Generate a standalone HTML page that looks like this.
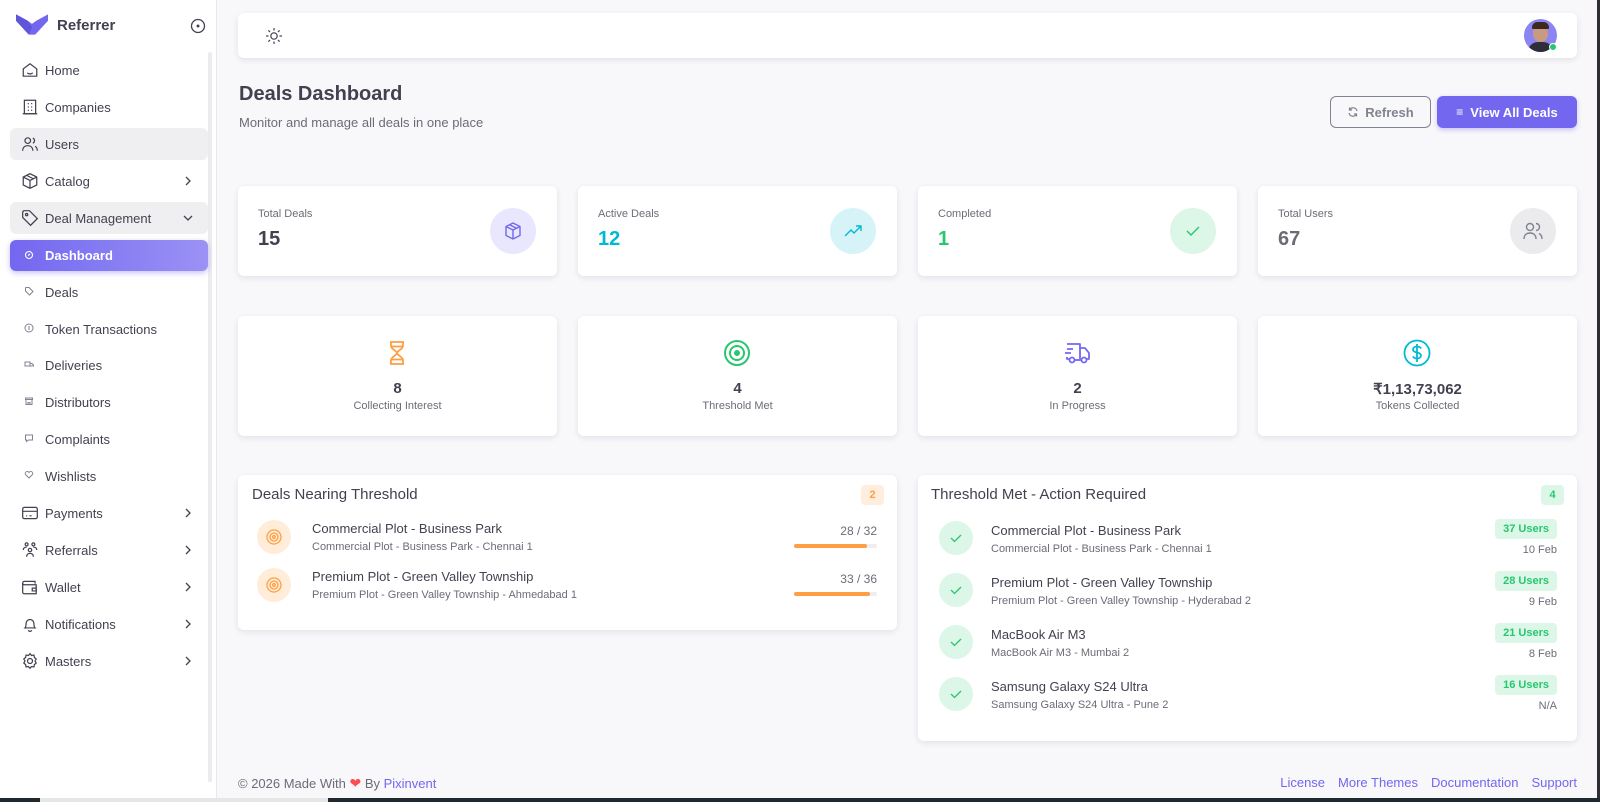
<!DOCTYPE html>
<html><head><meta charset="utf-8"><style>
*{margin:0;padding:0;box-sizing:border-box}
body{width:1600px;height:802px;overflow:hidden;background:#f8f7fa;font-family:"Liberation Sans",sans-serif;color:#444050;position:relative}
.a{position:absolute}
.side{left:0;top:0;width:217px;height:798px;background:#fff;border-right:1px solid #e8e8ec}
.mi{position:absolute;left:10px;width:198px;height:32px;border-radius:6px;font-size:13px;color:#444050;display:flex;align-items:center;padding-left:35px}
.mi svg{position:absolute;left:11px;top:7px}
.mi .ch{position:absolute;left:172px;top:10px}
.card{position:absolute;background:#fff;border-radius:6px;box-shadow:0 2px 6px rgba(47,43,61,.10)}
.lbl{position:absolute;font-size:11px;color:#6d6b77}
.val{position:absolute;font-size:20px;font-weight:bold}
.ic{position:absolute;width:46px;height:46px;border-radius:50%;display:flex;align-items:center;justify-content:center}
.c2{text-align:center}
.c2 .n{position:absolute;left:0;right:0;top:64px;font-size:15px;font-weight:bold;color:#444050}
.c2 .l{position:absolute;left:0;right:0;top:84px;font-size:11px;color:#6d6b77}
.c2 svg{position:absolute;left:144px;top:22px}
.t{font-size:13px;color:#444050;position:absolute;white-space:nowrap}
.s{font-size:11px;color:#6d6b77;position:absolute;white-space:nowrap}
.ub{position:absolute;right:20px;height:20px;padding:0 8px;border-radius:4px;background:#dcf6e8;color:#28c76f;font-size:11px;font-weight:bold;line-height:20px}
.dt{position:absolute;right:20px;font-size:11px;color:#6d6b77}
.gc{position:absolute;left:21px;width:34px;height:34px;border-radius:50%;background:#dcf6e8;display:flex;align-items:center;justify-content:center}
.fl span{margin-left:13px}
</style></head><body>

<div class="a side">
  <svg class="a" style="left:16px;top:14px" width="32" height="22" viewBox="0 0 30 20"><path d="M0 0 L11 6 L15 9 L19 6 L30 0 L30 6 L18 19 L12 19 L0 6Z" fill="#7367f0"/><path d="M0 0 L11 6 L15 12 L12 19 L0 6Z" fill="#5f55d8"/></svg>
  <div class="a" style="left:57px;top:17px;font-size:15px;font-weight:bold;color:#444050">Referrer</div>
  <svg class="a" style="left:190px;top:18px" width="16" height="16" viewBox="0 0 16 16"><circle cx="8" cy="8" r="6.5" fill="none" stroke="#444050" stroke-width="1.3"/><circle cx="8" cy="8" r="1.5" fill="#444050"/></svg>
  <div class="a" style="left:208px;top:52px;width:4px;height:730px;background:#ececee;border-radius:2px"></div>

  <div class="mi" style="top:54px"><svg width="18" height="18" viewBox="0 0 16 16" fill="none" stroke="#444050" stroke-width="1.1"><path d="M2 7 L8 2.5 L14 7 V13.5 H2Z"/><path d="M5.5 10.5 q2.5 2 5 0"/></svg>Home</div>
  <div class="mi" style="top:91px"><svg width="18" height="18" viewBox="0 0 16 16" fill="none" stroke="#444050" stroke-width="1.1"><rect x="3" y="2" width="10" height="12"/><path d="M1.5 14h13M6 5h1M9 5h1M6 8h1M9 8h1M6 11h1M9 11h1"/></svg>Companies</div>
  <div class="mi" style="top:128px;background:#efeff1"><svg width="18" height="18" viewBox="0 0 16 16" fill="none" stroke="#444050" stroke-width="1.1"><circle cx="6" cy="5" r="2.5"/><path d="M1.5 14c0-3 2-4.5 4.5-4.5s4.5 1.5 4.5 4.5M10.5 2.7a2.5 2.5 0 0 1 0 4.6M12.5 10c1.3.7 2 2 2 4"/></svg>Users</div>
  <div class="mi" style="top:165px"><svg width="18" height="18" viewBox="0 0 16 16" fill="none" stroke="#444050" stroke-width="1.1"><path d="M8 1.5 L14 4.5 V11.5 L8 14.5 L2 11.5 V4.5Z M2 4.5 L8 7.5 L14 4.5 M8 7.5 V14.5 M5 3 L11 6"/></svg>Catalog<svg class="ch" width="12" height="12" viewBox="0 0 12 12"><path d="M4 2 L8 6 L4 10" fill="none" stroke="#444050" stroke-width="1.3"/></svg></div>
  <div class="mi" style="top:202px;background:#efeff1"><svg width="18" height="18" viewBox="0 0 16 16" fill="none" stroke="#444050" stroke-width="1.1"><path d="M1.5 2.5 V7.5 L8.5 14.5 L14.5 8.5 L7.5 1.5 H2.5Z"/><circle cx="5" cy="5" r="1"/></svg>Deal Management<svg class="ch" width="12" height="12" viewBox="0 0 12 12"><path d="M2 4 L6 8 L10 4" fill="none" stroke="#444050" stroke-width="1.3"/></svg></div>
  <div class="mi" style="top:240px;height:31px;background:linear-gradient(90deg,#7367f0,#9a92f5);color:#fff;font-weight:bold;box-shadow:0 2px 6px rgba(115,103,240,.4)"><svg width="16" height="16" viewBox="0 0 16 16" fill="none" stroke="#fff" stroke-width="1.1" style="top:7px"><circle cx="8" cy="8" r="3.5"/><path d="M7 8.5 L9 7"/></svg>Dashboard</div>
  <div class="mi" style="top:276px"><svg width="16" height="16" viewBox="0 0 16 16" fill="none" stroke="#808390" stroke-width="1"><path d="M4.5 5 V8 L8.5 12 L12 8.5 L8 4.5 H5Z"/></svg>Deals</div>
  <div class="mi" style="top:313px"><svg width="16" height="16" viewBox="0 0 16 16" fill="none" stroke="#808390" stroke-width="1"><circle cx="8" cy="8" r="4"/><path d="M8 6v4"/></svg>Token Transactions</div>
  <div class="mi" style="top:349px"><svg width="16" height="16" viewBox="0 0 16 16" fill="none" stroke="#808390" stroke-width="1"><path d="M4 6h5v4H4zM9 7.5h2l1.5 1.5V10H9"/></svg>Deliveries</div>
  <div class="mi" style="top:386px"><svg width="16" height="16" viewBox="0 0 16 16" fill="none" stroke="#808390" stroke-width="1"><path d="M4.5 5h7v1.5h-7zM5 6.5v5h6v-5M7 11.5v-2h2v2"/></svg>Distributors</div>
  <div class="mi" style="top:423px"><svg width="16" height="16" viewBox="0 0 16 16" fill="none" stroke="#808390" stroke-width="1"><path d="M4.5 5h7v5h-4l-2 1.5V10h-1z"/></svg>Complaints</div>
  <div class="mi" style="top:460px"><svg width="16" height="16" viewBox="0 0 16 16" fill="none" stroke="#808390" stroke-width="1"><path d="M8 11 L4.5 7.5 a2 2 0 0 1 3.5-2 a2 2 0 0 1 3.5 2Z"/></svg>Wishlists</div>
  <div class="mi" style="top:497px"><svg width="18" height="18" viewBox="0 0 16 16" fill="none" stroke="#444050" stroke-width="1.1"><rect x="1.5" y="3" width="13" height="10" rx="1.5"/><path d="M1.5 6.5h13M4.5 10.5h1M7.5 10.5h2"/></svg>Payments<svg class="ch" width="12" height="12" viewBox="0 0 12 12"><path d="M4 2 L8 6 L4 10" fill="none" stroke="#444050" stroke-width="1.3"/></svg></div>
  <div class="mi" style="top:534px"><svg width="18" height="18" viewBox="0 0 16 16" fill="none" stroke="#444050" stroke-width="1.1"><circle cx="5" cy="3" r="1.3"/><circle cx="11" cy="3" r="1.3"/><circle cx="8" cy="8" r="1.5"/><path d="M5 14c0-2 1.3-3 3-3s3 1 3 3M2 8c0-1.5 1-2.5 3-2.5M14 8c0-1.5-1-2.5-3-2.5"/></svg>Referrals<svg class="ch" width="12" height="12" viewBox="0 0 12 12"><path d="M4 2 L8 6 L4 10" fill="none" stroke="#444050" stroke-width="1.3"/></svg></div>
  <div class="mi" style="top:571px"><svg width="18" height="18" viewBox="0 0 16 16" fill="none" stroke="#444050" stroke-width="1.1"><path d="M12.5 5 V3 H3 a1.5 1.5 0 0 0 0 3 H13.5 V14 H3 a1.5 1.5 0 0 1-1.5-1.5 V4.5"/><path d="M10 9h3.5v2.5H10z"/></svg>Wallet<svg class="ch" width="12" height="12" viewBox="0 0 12 12"><path d="M4 2 L8 6 L4 10" fill="none" stroke="#444050" stroke-width="1.3"/></svg></div>
  <div class="mi" style="top:608px"><svg width="18" height="18" viewBox="0 0 16 16" fill="none" stroke="#444050" stroke-width="1.1"><path d="M3.5 11.5 c1-1 1-2 1-4 a3.5 3.5 0 0 1 7 0 c0 2 0 3 1 4Z M6.5 13.5 a1.6 1.6 0 0 0 3 0"/></svg>Notifications<svg class="ch" width="12" height="12" viewBox="0 0 12 12"><path d="M4 2 L8 6 L4 10" fill="none" stroke="#444050" stroke-width="1.3"/></svg></div>
  <div class="mi" style="top:645px"><svg width="18" height="18" viewBox="0 0 16 16" fill="none" stroke="#444050" stroke-width="1.1"><circle cx="8" cy="8" r="2.2"/><path d="M8 1.5 l1.4 1.6 2.1-.4.4 2.1 1.6 1.4-1 1.8 1 1.8-1.6 1.4-.4 2.1-2.1-.4L8 14.5l-1.4-1.6-2.1.4-.4-2.1L2.5 9.8l1-1.8-1-1.8 1.6-1.4.4-2.1 2.1.4Z"/></svg>Masters<svg class="ch" width="12" height="12" viewBox="0 0 12 12"><path d="M4 2 L8 6 L4 10" fill="none" stroke="#444050" stroke-width="1.3"/></svg></div>
</div>

<!-- navbar -->
<div class="card" style="left:238px;top:13px;width:1339px;height:45px">
  <svg class="a" style="left:27px;top:14px" width="18" height="18" viewBox="0 0 18 18" fill="none" stroke="#444050" stroke-width="1.2" stroke-linecap="round"><circle cx="9" cy="9" r="3.2"/><path d="M9 1.5v1.5M9 15v1.5M1.5 9H3M15 9h1.5M3.7 3.7l1 1M13.3 13.3l1 1M3.7 14.3l1-1M13.3 4.7l1-1"/></svg>
  <div class="a" style="left:1286px;top:6px;width:33px;height:33px;border-radius:50%;background:#8c84f2;overflow:hidden">
    <div class="a" style="left:9px;top:5px;width:15px;height:18px;border-radius:50% 50% 45% 45%;background:#c89a82"></div>
    <div class="a" style="left:8px;top:3px;width:17px;height:7px;border-radius:8px 8px 2px 2px;background:#3a2a22"></div>
    <div class="a" style="left:4px;top:23px;width:25px;height:14px;border-radius:10px 10px 0 0;background:#2d2e3a"></div>
  </div>
  <div class="a" style="left:1311px;top:30px;width:8px;height:8px;border-radius:50%;background:#28c76f;border:1.5px solid #fff"></div>
</div>

<div class="a" style="left:239px;top:83px;font-size:20px;font-weight:bold;color:#444050">Deals Dashboard</div>
<div class="a" style="left:239px;top:115px;font-size:13px;color:#6d6b77">Monitor and manage all deals in one place</div>

<div class="a" style="left:1330px;top:96px;width:101px;height:32px;border:1px solid #808390;border-radius:6px;font-size:13px;font-weight:bold;color:#808390;display:flex;align-items:center;justify-content:center;gap:6px"><svg width="12" height="12" viewBox="0 0 12 12" fill="none" stroke="#808390" stroke-width="1.2"><path d="M10 5 A4 4 0 0 0 2.5 4 M2 7 A4 4 0 0 0 9.5 8 M2.5 1.5v2.5H5M9.5 10.5V8H7"/></svg>Refresh</div>
<div class="a" style="left:1437px;top:96px;width:140px;height:32px;background:#7367f0;border-radius:6px;font-size:13px;font-weight:bold;color:#fff;display:flex;align-items:center;justify-content:center;gap:7px;box-shadow:0 2px 5px rgba(115,103,240,.35)"><span style="font-weight:normal;font-size:12px">≡</span>View All Deals</div>

<!-- row 1 -->
<div class="card" style="left:238px;top:186px;width:319px;height:90px">
  <div class="lbl" style="left:20px;top:22px">Total Deals</div><div class="val" style="left:20px;top:42px;color:#444050">15</div>
  <div class="ic" style="left:252px;top:22px;background:#e9e7fd"><svg width="20" height="20" viewBox="0 0 20 20" fill="none" stroke="#7367f0" stroke-width="1.4"><path d="M10 2 L17 5.5 V14.5 L10 18 L3 14.5 V5.5Z M3 5.5 L10 9 L17 5.5 M10 9V18 M6.5 3.8 L13.5 7.3"/></svg></div>
</div>
<div class="card" style="left:578px;top:186px;width:319px;height:90px">
  <div class="lbl" style="left:20px;top:22px">Active Deals</div><div class="val" style="left:20px;top:42px;color:#00bad1">12</div>
  <div class="ic" style="left:252px;top:22px;background:#d6f4f8"><svg width="20" height="20" viewBox="0 0 20 20" fill="none" stroke="#00bad1" stroke-width="1.4"><path d="M2 15 L8 9 L11 12 L18 5 M13 5h5v5"/></svg></div>
</div>
<div class="card" style="left:918px;top:186px;width:319px;height:90px">
  <div class="lbl" style="left:20px;top:22px">Completed</div><div class="val" style="left:20px;top:42px;color:#28c76f">1</div>
  <div class="ic" style="left:252px;top:22px;background:#dcf6e8"><svg width="20" height="20" viewBox="0 0 20 20" fill="none" stroke="#28c76f" stroke-width="1.4"><path d="M4 10 L8 14 L16 6"/></svg></div>
</div>
<div class="card" style="left:1258px;top:186px;width:319px;height:90px">
  <div class="lbl" style="left:20px;top:22px">Total Users</div><div class="val" style="left:20px;top:42px;color:#6d6b77">67</div>
  <div class="ic" style="left:252px;top:22px;background:#ebebed"><svg width="22" height="22" viewBox="0 0 22 22" fill="none" stroke="#808390" stroke-width="1.4"><circle cx="8" cy="7" r="3.5"/><path d="M2 19c0-4 2.5-6 6-6s6 2 6 6M14 3.5a3.5 3.5 0 0 1 0 7M17 13.5c2 1 3 3 3 5.5"/></svg></div>
</div>

<!-- row 2 -->
<div class="card c2" style="left:238px;top:316px;width:319px;height:120px">
  <svg width="30" height="30" viewBox="0 0 30 30" fill="none" stroke="#ff9f43" stroke-width="1.8" stroke-linejoin="round"><path d="M8 4h14M8 26h14M9 4v4c0 3 6 5 6 7s-6 4-6 7v4M21 4v4c0 3-6 5-6 7s6 4 6 7v4M9 8.5h12M9 21.5h12"/></svg>
  <div class="n">8</div><div class="l">Collecting Interest</div>
</div>
<div class="card c2" style="left:578px;top:316px;width:319px;height:120px">
  <svg width="30" height="30" viewBox="0 0 30 30" fill="none" stroke="#28c76f" stroke-width="2"><circle cx="15" cy="15" r="12"/><circle cx="15" cy="15" r="7"/><circle cx="15" cy="15" r="2" fill="#28c76f"/></svg>
  <div class="n">4</div><div class="l">Threshold Met</div>
</div>
<div class="card c2" style="left:918px;top:316px;width:319px;height:120px">
  <svg width="30" height="30" viewBox="0 0 30 30" fill="none" stroke="#7367f0" stroke-width="1.8" stroke-linejoin="round"><path d="M5 6h13v15M18 10h5l4 5v6h-3M5 11h6M3 15h6M5 19v2h2"/><circle cx="10" cy="22" r="2.5"/><circle cx="22" cy="22" r="2.5"/><path d="M12.5 22h7"/></svg>
  <div class="n">2</div><div class="l">In Progress</div>
</div>
<div class="card c2" style="left:1258px;top:316px;width:319px;height:120px">
  <svg width="30" height="30" viewBox="0 0 30 30" fill="none" stroke="#00bad1" stroke-width="1.8"><circle cx="15" cy="15" r="12.5"/><path d="M19 10.5c-.7-1.3-2-2-4-2-2.3 0-4 1.2-4 3s1.7 2.5 4 3 4 1.2 4 3-1.7 3-4 3c-2 0-3.4-.8-4-2.2M15 6v18"/></svg>
  <div class="n">₹1,13,73,062</div><div class="l">Tokens Collected</div>
</div>

<!-- bottom left -->
<div class="card" style="left:238px;top:475px;width:659px;height:155px">
  <div class="a" style="left:14px;top:11px;font-size:15px;color:#444050">Deals Nearing Threshold</div>
  <div class="a" style="left:623px;top:10px;width:23px;height:20px;border-radius:4px;background:#ffeedd;color:#ff9f43;font-size:11px;font-weight:bold;text-align:center;line-height:20px">2</div>

  <div class="a" style="left:19px;top:45px;width:34px;height:34px;border-radius:50%;background:#ffecd9;display:flex;align-items:center;justify-content:center"><svg width="18" height="18" viewBox="0 0 18 18" fill="none" stroke="#ff9f43" stroke-width="1.3"><circle cx="9" cy="9" r="7"/><circle cx="9" cy="9" r="4"/><circle cx="9" cy="9" r="1.3"/></svg></div>
  <div class="t" style="left:74px;top:46px">Commercial Plot - Business Park</div>
  <div class="s" style="left:74px;top:66px">Commercial Plot - Business Park - Chennai 1</div>
  <div class="s" style="right:20px;top:49px;font-size:12px">28 / 32</div>
  <div class="a" style="left:556px;top:69px;width:83px;height:4px;border-radius:2px;background:#eeeef0"><div style="width:88%;height:4px;border-radius:2px;background:#ff9f43"></div></div>

  <div class="a" style="left:19px;top:93px;width:34px;height:34px;border-radius:50%;background:#ffecd9;display:flex;align-items:center;justify-content:center"><svg width="18" height="18" viewBox="0 0 18 18" fill="none" stroke="#ff9f43" stroke-width="1.3"><circle cx="9" cy="9" r="7"/><circle cx="9" cy="9" r="4"/><circle cx="9" cy="9" r="1.3"/></svg></div>
  <div class="t" style="left:74px;top:94px">Premium Plot - Green Valley Township</div>
  <div class="s" style="left:74px;top:114px">Premium Plot - Green Valley Township - Ahmedabad 1</div>
  <div class="s" style="right:20px;top:97px;font-size:12px">33 / 36</div>
  <div class="a" style="left:556px;top:117px;width:83px;height:4px;border-radius:2px;background:#eeeef0"><div style="width:92%;height:4px;border-radius:2px;background:#ff9f43"></div></div>
</div>

<!-- bottom right -->
<div class="card" style="left:918px;top:475px;width:659px;height:266px">
  <div class="a" style="left:13px;top:11px;font-size:15px;color:#444050">Threshold Met - Action Required</div>
  <div class="a" style="left:623px;top:10px;width:23px;height:20px;border-radius:4px;background:#dcf6e8;color:#28c76f;font-size:11px;font-weight:bold;text-align:center;line-height:20px">4</div>

  <div class="gc" style="top:46px"><svg width="16" height="16" viewBox="0 0 16 16" fill="none" stroke="#28c76f" stroke-width="1.3"><path d="M3 8 L6.5 11.5 L13 5"/></svg></div>
  <div class="t" style="left:73px;top:48px">Commercial Plot - Business Park</div>
  <div class="s" style="left:73px;top:68px">Commercial Plot - Business Park - Chennai 1</div>
  <div class="ub" style="top:44px">37 Users</div><div class="dt" style="top:69px">10 Feb</div>

  <div class="gc" style="top:98px"><svg width="16" height="16" viewBox="0 0 16 16" fill="none" stroke="#28c76f" stroke-width="1.3"><path d="M3 8 L6.5 11.5 L13 5"/></svg></div>
  <div class="t" style="left:73px;top:100px">Premium Plot - Green Valley Township</div>
  <div class="s" style="left:73px;top:120px">Premium Plot - Green Valley Township - Hyderabad 2</div>
  <div class="ub" style="top:96px">28 Users</div><div class="dt" style="top:121px">9 Feb</div>

  <div class="gc" style="top:150px"><svg width="16" height="16" viewBox="0 0 16 16" fill="none" stroke="#28c76f" stroke-width="1.3"><path d="M3 8 L6.5 11.5 L13 5"/></svg></div>
  <div class="t" style="left:73px;top:152px">MacBook Air M3</div>
  <div class="s" style="left:73px;top:172px">MacBook Air M3 - Mumbai 2</div>
  <div class="ub" style="top:148px">21 Users</div><div class="dt" style="top:173px">8 Feb</div>

  <div class="gc" style="top:202px"><svg width="16" height="16" viewBox="0 0 16 16" fill="none" stroke="#28c76f" stroke-width="1.3"><path d="M3 8 L6.5 11.5 L13 5"/></svg></div>
  <div class="t" style="left:73px;top:204px">Samsung Galaxy S24 Ultra</div>
  <div class="s" style="left:73px;top:224px">Samsung Galaxy S24 Ultra - Pune 2</div>
  <div class="ub" style="top:200px">16 Users</div><div class="dt" style="top:225px">N/A</div>
</div>

<!-- footer -->
<div class="a" style="left:238px;top:775px;font-size:13px;color:#6d6b77">© 2026 Made With <span style="color:#ff4c51;font-size:14px">❤</span> By <span style="color:#7367f0">Pixinvent</span></div>
<div class="a fl" style="right:23px;top:775px;font-size:13px;color:#7367f0;white-space:nowrap">License<span>More Themes</span><span>Documentation</span><span>Support</span></div>

<div class="a" style="left:1597px;top:0;width:3px;height:802px;background:#2c2f36"></div>
<div class="a" style="left:0;top:798px;width:1600px;height:4px;background:#1f2a30"></div>
<div class="a" style="left:40px;top:798px;width:288px;height:4px;background:#e6e6e6"></div>
</body></html>
